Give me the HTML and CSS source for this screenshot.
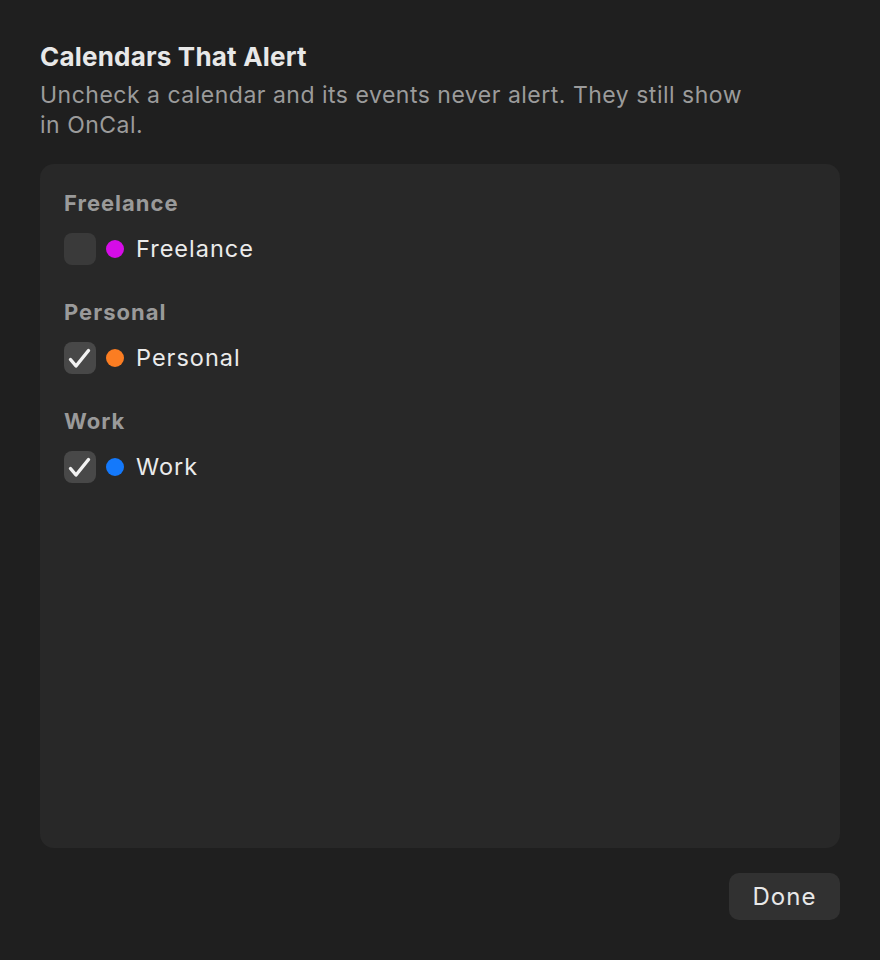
FILE: index.html
```html
<!DOCTYPE html>
<html lang="en">
<head>
<meta charset="utf-8">
<title>Calendars That Alert</title>
<link rel="stylesheet" href="styles.css">
</head>
<body>
<div class="sheet">
  <h1 class="title">Calendars That Alert</h1>
  <p class="subtitle">Uncheck a calendar and its events never alert. They still show in OnCal.</p>
  <div class="panel">
    <section class="group">
      <div class="group-label">Freelance</div>
      <label class="row">
        <span class="check"></span>
        <span class="dot dot-purple"></span>
        <span class="name">Freelance</span>
      </label>
    </section>
    <section class="group">
      <div class="group-label">Personal</div>
      <label class="row">
        <span class="check on"><svg viewBox="0 0 32 32" width="32" height="32"><path d="M6.5 17.5 L12 24 L24.5 8.5" fill="none" stroke="#f2f2f2" stroke-width="3.4" stroke-linecap="round" stroke-linejoin="round"/></svg></span>
        <span class="dot dot-orange"></span>
        <span class="name">Personal</span>
      </label>
    </section>
    <section class="group">
      <div class="group-label">Work</div>
      <label class="row">
        <span class="check on"><svg viewBox="0 0 32 32" width="32" height="32"><path d="M6.5 17.5 L12 24 L24.5 8.5" fill="none" stroke="#f2f2f2" stroke-width="3.4" stroke-linecap="round" stroke-linejoin="round"/></svg></span>
        <span class="dot dot-blue"></span>
        <span class="name">Work</span>
      </label>
    </section>
  </div>
  <div class="footer">
    <button class="done">Done</button>
  </div>
</div>
</body>
</html>
```

FILE: styles.css
```css
html, body {
  margin: 0;
  padding: 0;
  background: #1f1f1f;
}
body {
  font-family: Inter, "Noto Sans", "Liberation Sans", sans-serif;
  color: #e6e6e6;
}
.sheet {
  box-sizing: border-box;
  height: 960px;
  padding: 40px 40px 40px;
  display: flex;
  flex-direction: column;
}
.title {
  margin: 0;
  font-size: 26px;
  line-height: 33px;
  font-weight: 700;
  letter-spacing: 0.2px;
  color: #e8e8e8;
}
.subtitle {
  margin: 7px 0 0;
  max-width: 712px;
  font-size: 23px;
  line-height: 30px;
  letter-spacing: 0.5px;
  color: #9b9b9b;
}
.panel {
  margin-top: 24px;
  flex: 1;
  background: #282828;
  border-radius: 14px;
  padding: 25px 24px;
  display: flex;
  flex-direction: column;
  gap: 33px;
}
.group-label {
  font-size: 22px;
  line-height: 28px;
  font-weight: 700;
  letter-spacing: 1px;
  color: #9a9a9a;
}
.row {
  margin-top: 16px;
  display: flex;
  align-items: center;
  height: 32px;
}
.check {
  width: 32px;
  height: 32px;
  border-radius: 8px;
  background: #3a3a3a;
  display: block;
}
.check.on {
  background: #484848;
}
.check svg {
  display: block;
}
.dot {
  width: 18px;
  height: 18px;
  border-radius: 50%;
  margin-left: 10px;
}
.dot-purple { background: #d60ce8; }
.dot-orange { background: #fb7d22; }
.dot-blue { background: #1479fb; }
.name {
  margin-left: 12px;
  font-size: 23.5px;
  line-height: 32px;
  letter-spacing: 1px;
  color: #ebebeb;
}
.footer {
  display: flex;
  justify-content: flex-end;
  margin-top: 25px;
}
.done {
  width: 111px;
  height: 47px;
  border: 0;
  border-radius: 10px;
  background: #313131;
  color: #e8e8e8;
  font-family: inherit;
  font-size: 24px;
  letter-spacing: 1px;
}
```
